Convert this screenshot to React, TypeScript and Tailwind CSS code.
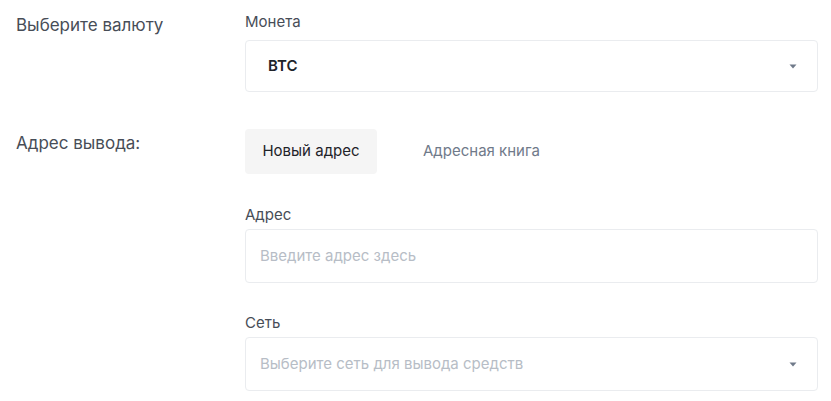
import React from 'react';

function Caret() {
  return (
    <svg width="8" height="5" viewBox="0 0 8 5" className="shrink-0">
      <path d="M0.5 0.5h7L4 4.5z" fill="#707a8a" />
    </svg>
  );
}

export default function App() {
  return (
    <div className="w-[831px] h-[401px] bg-white font-['Inter','Noto_Sans',sans-serif] text-[#1e2329] overflow-hidden">
      <div className="flex pl-4 pr-[13px] pt-[14px]">
        {/* Left labels column */}
        <div className="w-[229px] shrink-0 text-[17px] text-[#474d57]">
          <div className="pt-[1px] leading-[20px]">Выберите валюту</div>
          <div className="mt-[98px] leading-[20px]">Адрес вывода:</div>
        </div>

        {/* Right form column */}
        <div className="flex-1">
          <div className="text-[15px] leading-[16px] text-[#474d57]">Монета</div>
          <div className="mt-[10px] h-[52px] border border-[#eaecef] rounded-[4px] flex items-center justify-between pl-[22px] pr-5">
            <span className="text-[15px] font-semibold text-[#1e2329] pt-[1px]">BTC</span>
            <Caret />
          </div>

          <div className="mt-[37px] flex items-center">
            <button className="h-[45px] w-[132px] bg-[#f5f5f5] rounded-[4px] text-[15px] text-[#1e2329]">
              Новый адрес
            </button>
            <button className="ml-[46px] text-[15px] text-[#707a8a]">Адресная книга</button>
          </div>

          <div className="mt-[33px] text-[15px] leading-[16px] text-[#474d57]">Адрес</div>
          <div className="mt-[6px] h-[54px] border border-[#eaecef] rounded-[4px] flex items-center px-[14px]">
            <span className="text-[15px] text-[#b7bdc6] pt-[1px]">Введите адрес здесь</span>
          </div>

          <div className="mt-[32px] text-[15px] leading-[16px] text-[#474d57]">Сеть</div>
          <div className="mt-[6px] h-[54px] border border-[#eaecef] rounded-[4px] flex items-center justify-between pl-[14px] pr-5">
            <span className="text-[15px] text-[#b7bdc6] pt-[1px]">Выберите сеть для вывода средств</span>
            <Caret />
          </div>
        </div>
      </div>
    </div>
  );
}
